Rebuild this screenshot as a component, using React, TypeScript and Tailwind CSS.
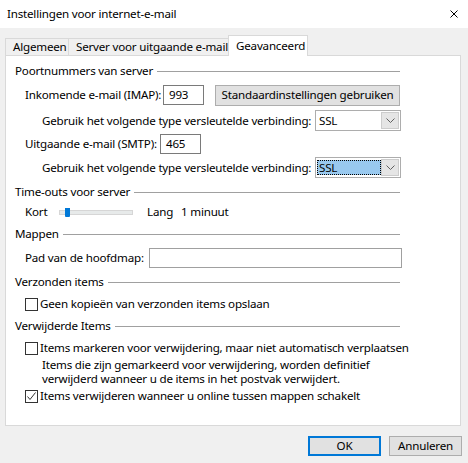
import React from "react";

const GroupHeader = ({ title, className }: { title: string; className: string }) => {
  return (
    <div className={`flex h-[16px] w-[385px] items-center gap-[4px] ${className}`}>
      <span className="whitespace-nowrap">{title}</span>
      <div className="h-px flex-1 bg-[#a0a0a0]" />
    </div>
  );
};

const Chevron = () => (
  <svg width="9" height="5" viewBox="0 0 9 5">
    <path d="M0.5 0.5L4.5 4.5L8.5 0.5" fill="none" stroke="#606060" strokeWidth="1" />
  </svg>
);

const Checkbox = ({ checked }: { checked?: boolean }) => (
  <span className="flex h-[13px] w-[13px] shrink-0 items-center justify-center border border-[#333333] bg-white">
    {checked && (
      <svg width="11" height="11" viewBox="0 0 11 11">
        <path d="M1.5 5.5L4 8.5L9.5 1.5" fill="none" stroke="#333333" strokeWidth="1" />
      </svg>
    )}
  </span>
);

export default function App() {
  return (
    <div className="flex h-[463px] w-[468px] flex-col overflow-hidden bg-[#f0f0f0] font-['Noto_Sans',sans-serif] text-[11.6px] leading-[16px] tracking-[-0.2px] text-black">
      {/* title bar */}
      <div className="flex h-[28px] shrink-0 items-center justify-between bg-white pl-[7px] pr-[10px]">
        <span>Instellingen voor internet-e-mail</span>
        <svg width="8" height="8" viewBox="0 0 8 8">
          <path d="M0.5 0.5L7.5 7.5M7.5 0.5L0.5 7.5" stroke="#000" strokeWidth="1" />
        </svg>
      </div>

      {/* tabs */}
      <div className="ml-[5px] mt-[7px] flex h-[20px] items-end">
        <div className="flex h-[17px] w-[64px] items-center border border-b-0 border-[#d9d9d9] pl-[7px]">Algemeen</div>
        <div className="flex h-[17px] w-[159px] items-center border-t border-[#d9d9d9] pl-[7px] whitespace-nowrap">
          Server voor uitgaande e-mail
        </div>
        <div className="relative z-10 -mb-px flex h-[21px] w-[80px] items-center border border-b-0 border-[#d9d9d9] bg-white pl-[7px]">
          Geavanceerd
        </div>
      </div>

      {/* tab panel */}
      <div className="ml-[5px] flex h-[371px] w-[456px] flex-col border border-[#d9d9d9] bg-white pl-[9px]">
        <GroupHeader title="Poortnummers van server" className="mt-[7px]" />

        <div className="ml-[10px] mt-[5px] flex h-[22px] items-center">
          <span className="w-[138px] whitespace-nowrap">Inkomende e-mail (IMAP):</span>
          <div className="flex h-[20px] w-[41px] items-center border border-[#7a7a7a] pl-[5px]">993</div>
          <div className="ml-[11px] flex h-[21px] w-[185px] items-center justify-center border border-[#adadad] bg-[#e1e1e1] whitespace-nowrap">
            Standaardinstellingen gebruiken
          </div>
        </div>

        <div className="ml-[27px] mt-[3px] flex h-[23px] items-center">
          <span className="w-[273px] whitespace-nowrap">Gebruik het volgende type versleutelde verbinding:</span>
          <div className="flex h-[21px] w-[86px] items-center border border-[#adadad] bg-white">
            <span className="flex-1 pl-[3px]">SSL</span>
            <span className="mr-px flex h-[17px] w-[18px] items-center justify-center border border-[#cccccc] bg-[#e5e5e5]">
              <Chevron />
            </span>
          </div>
        </div>

        <div className="ml-[10px] mt-[1px] flex h-[21px] items-center">
          <span className="w-[135px] whitespace-nowrap">Uitgaande e-mail (SMTP):</span>
          <div className="flex h-[20px] w-[41px] items-center border border-[#7a7a7a] pl-[5px]">465</div>
        </div>

        <div className="ml-[27px] mt-[2px] flex h-[23px] items-center">
          <span className="w-[273px] whitespace-nowrap">Gebruik het volgende type versleutelde verbinding:</span>
          <div className="flex h-[21px] w-[86px] items-center border border-[#adadad] bg-white">
            <span className="ml-px flex h-[15px] flex-1 items-center border border-dotted border-black bg-[#99c9ef] pl-px">SSL</span>
            <span className="mr-px flex h-[17px] w-[18px] items-center justify-center border border-[#cccccc] bg-[#e5e5e5]">
              <Chevron />
            </span>
          </div>
        </div>

        <GroupHeader title="Time-outs voor server" className="mt-[5px]" />

        <div className="ml-[10px] mt-[4px] flex h-[16px] items-center">
          <span className="w-[34px]">Kort</span>
          <div className="relative h-[5px] w-[74px] border border-[#d6d6d6] bg-[#e7eaea]">
            <div className="absolute left-[5px] top-[-3px] h-[9px] w-[5px] rounded-b-[1px] bg-[#0078d7]" />
          </div>
          <span className="ml-[14px] w-[34px]">Lang</span>
          <span>1 minuut</span>
        </div>

        <GroupHeader title="Mappen" className="mt-[6px]" />

        <div className="ml-[10px] mt-[5px] flex h-[22px] items-center">
          <span className="w-[124px] whitespace-nowrap">Pad van de hoofdmap:</span>
          <div className="h-[20px] w-[253px] border border-[#a0a0a0]" />
        </div>

        <GroupHeader title="Verzonden items" className="mt-[5px]" />

        <div className="ml-[10px] mt-[6px] flex h-[16px] items-center gap-[2px]">
          <Checkbox />
          <span className="whitespace-nowrap">Geen kopieën van verzonden items opslaan</span>
        </div>

        <GroupHeader title="Verwijderde Items" className="mt-[6px]" />

        <div className="ml-[10px] mt-[6px] flex h-[16px] items-center gap-[2px]">
          <Checkbox />
          <span className="whitespace-nowrap">Items markeren voor verwijdering, maar niet automatisch verplaatsen</span>
        </div>

        <div className="ml-[27px] mt-[2px] flex flex-col leading-[14px]">
          <span className="whitespace-nowrap">Items die zijn gemarkeerd voor verwijdering, worden definitief</span>
          <span className="whitespace-nowrap">verwijderd wanneer u de items in het postvak verwijdert.</span>
        </div>

        <div className="ml-[10px] mt-[2px] flex h-[16px] items-center gap-[2px]">
          <Checkbox checked />
          <span className="whitespace-nowrap">Items verwijderen wanneer u online tussen mappen schakelt</span>
        </div>
      </div>

      {/* buttons */}
      <div className="mt-[10px] flex justify-end gap-[8px] pr-[6px]">
        <div className="flex h-[20px] w-[73px] items-center justify-center border-2 border-[#0078d7] bg-[#e1e1e1]">OK</div>
        <div className="flex h-[20px] w-[73px] items-center justify-center border border-[#adadad] bg-[#e1e1e1]">Annuleren</div>
      </div>
    </div>
  );
}
